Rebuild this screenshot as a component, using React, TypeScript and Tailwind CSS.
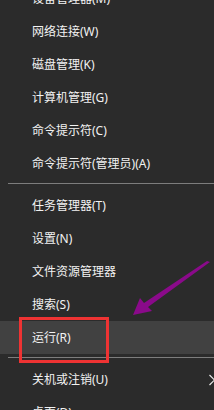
import React from "react";

type Item = { label: string; sep?: boolean; active?: boolean; sub?: boolean };

const items: Item[] = [
  { label: "设备管理器(M)" },
  { label: "网络连接(W)" },
  { label: "磁盘管理(K)" },
  { label: "计算机管理(G)" },
  { label: "命令提示符(C)" },
  { label: "命令提示符(管理员)(A)" },
  { label: "", sep: true },
  { label: "任务管理器(T)" },
  { label: "设置(N)" },
  { label: "文件资源管理器" },
  { label: "搜索(S)" },
  { label: "运行(R)", active: true },
  { label: "", sep: true },
  { label: "关机或注销(U)", sub: true },
  { label: "桌面(D)" },
];

export default function App() {
  return (
    <div className="relative h-[410px] w-[214px] overflow-hidden bg-[#2b2b2b] font-['Noto_Sans','Noto_Sans_CJK_SC',sans-serif] text-[12px] text-[#f2f2f2]">
      <ul className="-mt-[18px] w-[230px]">
        {items.map((it, i) =>
          it.sep ? (
            <li key={i} className="h-[9px] pl-[8px] pt-[3px]">
              <div className="h-px bg-[#7d7d7d]" />
            </li>
          ) : (
            <li
              key={i}
              className={
                "flex h-[33px] items-center justify-between pl-[32px] pr-[14px] " +
                (it.active ? "bg-[#414141]" : "")
              }
            >
              <span className="leading-none">{it.label}</span>
              {it.sub && (
                <svg width="8" height="12" viewBox="0 0 8 12" fill="none">
                  <path d="M1.5 1 L6.5 6 L1.5 11" stroke="#e8e8e8" strokeWidth="1.2" />
                </svg>
              )}
            </li>
          )
        )}
      </ul>

      {/* red highlight box */}
      <div className="absolute left-[19px] top-[317px] h-[46px] w-[90px] border-[3px] border-[#ee3333]" />

      {/* purple arrow */}
      <svg className="absolute left-0 top-0" width="214" height="410" viewBox="0 0 214 410">
        <polygon
          points="210,262 148,307 152,311 133,315 140,298 144,303 207,261"
          fill="#8a0a8a"
        />
      </svg>
    </div>
  );
}
